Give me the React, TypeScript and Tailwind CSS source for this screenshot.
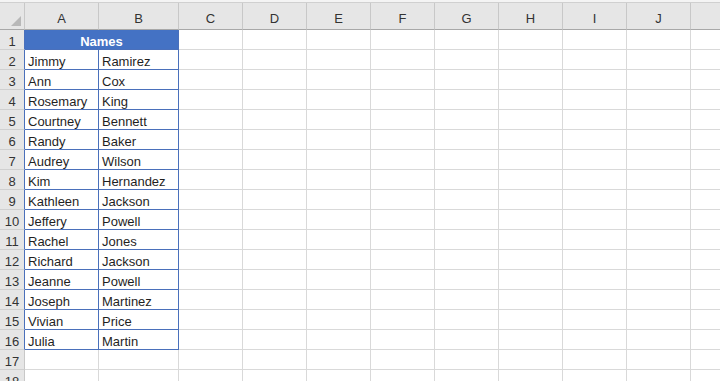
import React from 'react';

const names: [string, string][] = [
  ['Jimmy', 'Ramirez'],
  ['Ann', 'Cox'],
  ['Rosemary', 'King'],
  ['Courtney', 'Bennett'],
  ['Randy', 'Baker'],
  ['Audrey', 'Wilson'],
  ['Kim', 'Hernandez'],
  ['Kathleen', 'Jackson'],
  ['Jeffery', 'Powell'],
  ['Rachel', 'Jones'],
  ['Richard', 'Jackson'],
  ['Jeanne', 'Powell'],
  ['Joseph', 'Martinez'],
  ['Vivian', 'Price'],
  ['Julia', 'Martin'],
];

const extraCols = ['C', 'D', 'E', 'F', 'G', 'H', 'I', 'J', ''];

export default function App() {
  // rows 1..18, row 1 is the merged header
  const rows = Array.from({ length: 18 }, (_, i) => i + 1);

  return (
    <div className="w-[720px] h-[381px] overflow-hidden bg-white font-['Liberation_Sans',Arial,sans-serif] text-[13px] text-[#1f1f1f]">
      {/* top strip */}
      <div className="h-[3px] bg-[#f4f4f4] border-b border-[#d0d0d0]" />

      <div className="grid grid-cols-[25px_74px_80px_repeat(9,64px)] w-max">
        {/* column headers */}
        <div className="relative h-[27px] bg-[#e6e6e6] border-r border-b border-[#c8c8c8] border-b-[#a8a8a8]">
          <div className="absolute right-[3px] bottom-[3px] w-0 h-0 border-l-[10px] border-l-transparent border-b-[10px] border-b-[#b8b8b8]" />
        </div>
        {['A', 'B', ...extraCols].map((c, i) => (
          <div
            key={i}
            className="h-[27px] bg-[#e6e6e6] border-r border-[#c8c8c8] border-b border-b-[#a8a8a8] flex items-center justify-center pt-[6px] text-[#333]"
          >
            {c}
          </div>
        ))}

        {rows.map((r) => {
          const inTable = r <= 16;
          return (
            <React.Fragment key={r}>
              <div
                className={`h-[20px] bg-[#e6e6e6] border-b border-[#d0d0d0] border-r flex items-center justify-center pt-[4px] text-[#333] ${
                  inTable ? 'border-r-[#4a70bb]' : 'border-r-[#c8c8c8]'
                }`}
              >
                {r}
              </div>
              {r === 1 ? (
                <div className="col-span-2 h-[20px] bg-[#4472c4] border-r border-b border-[#4a70bb] flex items-center justify-center pt-[4px] font-bold text-white">
                  Names
                </div>
              ) : inTable ? (
                <>
                  <div className="h-[20px] border-r border-b border-[#4a70bb] flex items-center pl-[3px] pt-[4px] whitespace-nowrap">
                    {names[r - 2][0]}
                  </div>
                  <div className="h-[20px] border-r border-b border-[#4a70bb] flex items-center pl-[3px] pt-[4px] whitespace-nowrap">
                    {names[r - 2][1]}
                  </div>
                </>
              ) : (
                <>
                  <div className="h-[20px] border-r border-b border-[#d9d9d9]" />
                  <div className="h-[20px] border-r border-b border-[#d9d9d9]" />
                </>
              )}
              {extraCols.map((c, i) => (
                <div key={i} className="h-[20px] border-r border-b border-[#d9d9d9]" />
              ))}
            </React.Fragment>
          );
        })}
      </div>
    </div>
  );
}
